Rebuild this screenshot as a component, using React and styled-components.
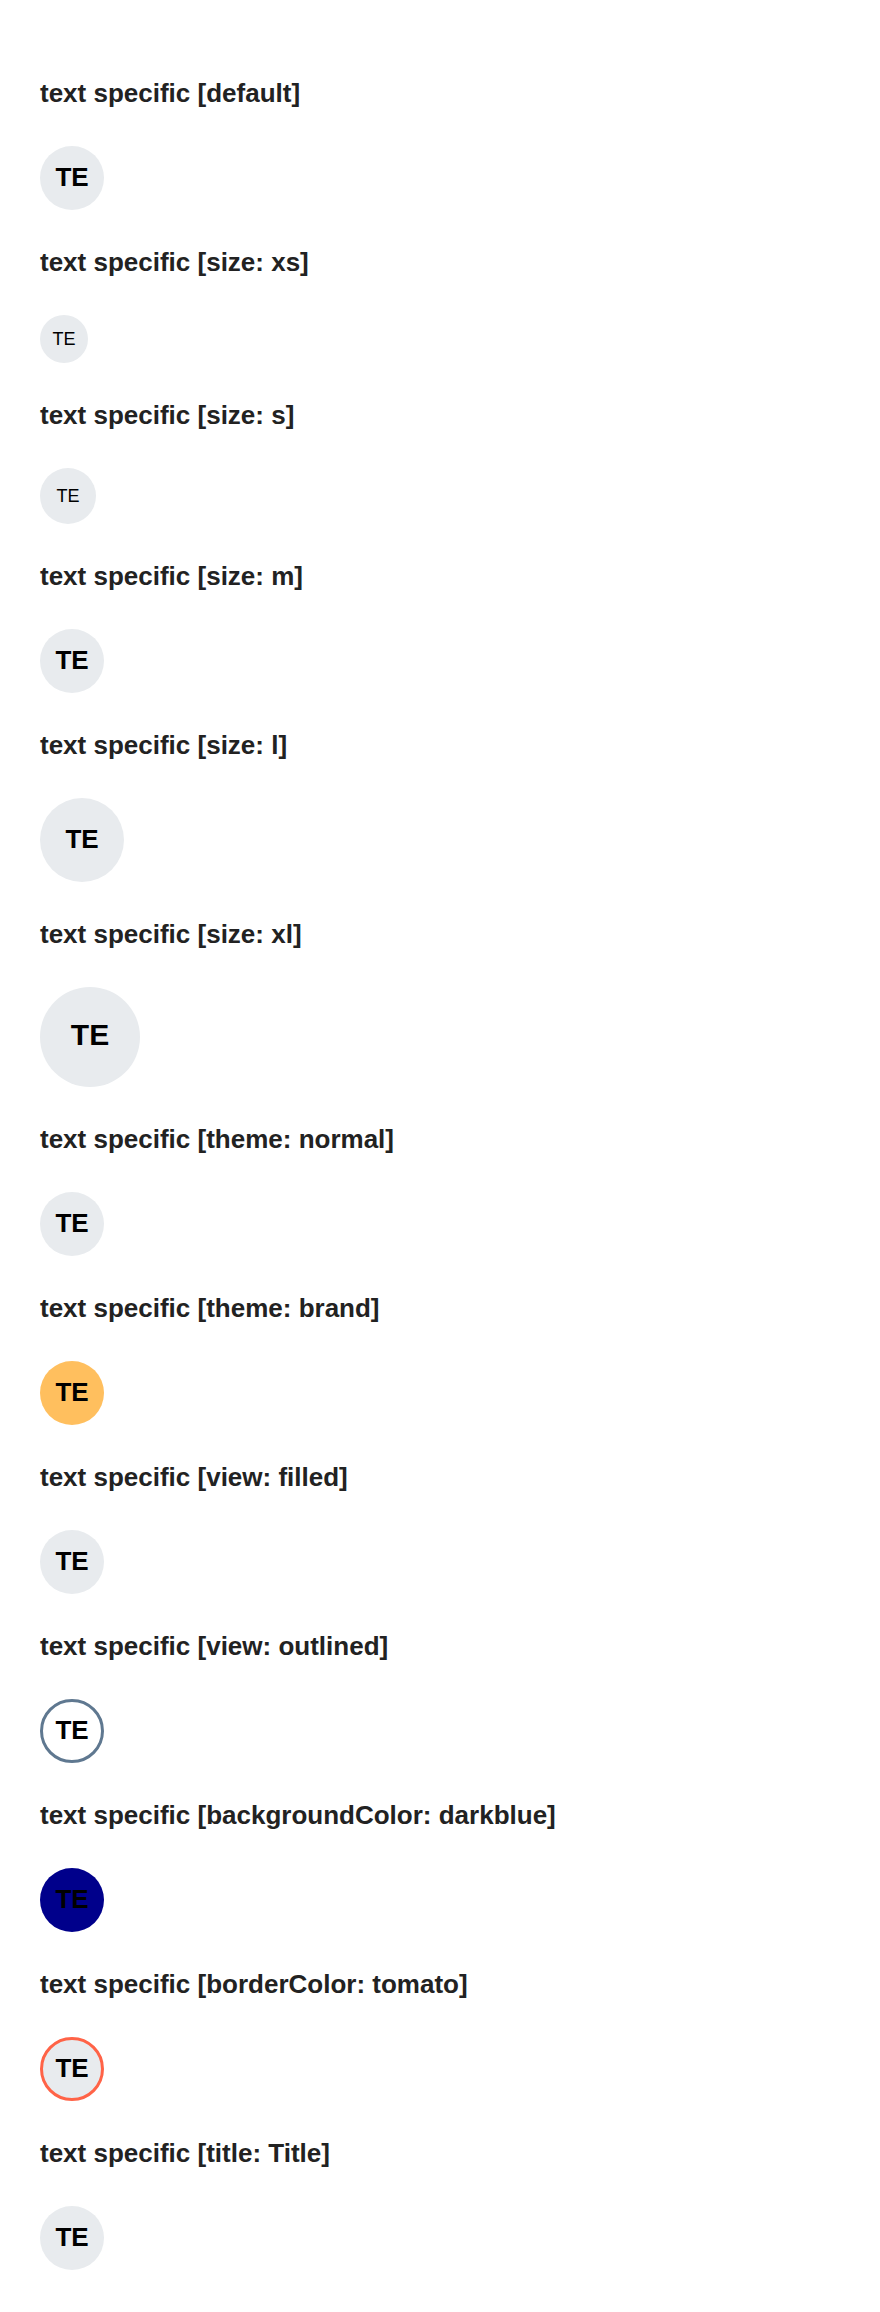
import React from "react";
import styled, { createGlobalStyle, css } from "styled-components";

const GlobalStyle = createGlobalStyle`
  html, body {
    margin: 0;
    padding: 0;
    background: #ffffff;
  }
  body {
    font-family: "Liberation Sans", Arial, sans-serif;
  }
`;

const Page = styled.main`
  display: flex;
  flex-direction: column;
  padding: 78px 40px 40px;
`;

const Section = styled.section`
  display: flex;
  flex-direction: column;
  align-items: flex-start;
`;

const Heading = styled.h3`
  margin: 0 0 38px;
  font-family: "Liberation Sans", Arial, sans-serif;
  font-size: 26px;
  font-weight: 700;
  line-height: 30px;
  color: #222222;
`;

const AvatarRow = styled.div`
  display: flex;
  margin-bottom: 37px;
`;

const SIZES = {
  xs: { box: 48, font: 18, weight: 400, lift: 0 },
  s: { box: 56, font: 18, weight: 400, lift: 0 },
  m: { box: 64, font: 26, weight: 700, lift: 1 },
  l: { box: 84, font: 26, weight: 700, lift: 1 },
  xl: { box: 100, font: 30, weight: 700, lift: 4 },
};

const THEMES = {
  normal: "#e8ebee",
  brand: "#ffbf5e",
};

const Avatar = styled.div`
  box-sizing: border-box;
  display: flex;
  align-items: center;
  justify-content: center;
  flex: none;
  border-radius: 50%;
  width: ${(p) => SIZES[p.$size].box}px;
  height: ${(p) => SIZES[p.$size].box}px;
  padding-bottom: ${(p) => SIZES[p.$size].lift}px;
  font-family: "Liberation Sans", Arial, sans-serif;
  font-size: ${(p) => SIZES[p.$size].font}px;
  font-weight: ${(p) => SIZES[p.$size].weight};
  color: #000000;
  background: ${(p) => p.$bg || THEMES[p.$theme]};
  ${(p) =>
    p.$view === "outlined" &&
    css`
      background: #ffffff;
      border: 3px solid #5f7890;
    `}
  ${(p) =>
    p.$borderColor &&
    css`
      border: 3px solid ${p.$borderColor};
    `}
`;

const items = [
  { label: "default" },
  { label: "size: xs", size: "xs" },
  { label: "size: s", size: "s" },
  { label: "size: m", size: "m" },
  { label: "size: l", size: "l" },
  { label: "size: xl", size: "xl" },
  { label: "theme: normal", theme: "normal" },
  { label: "theme: brand", theme: "brand" },
  { label: "view: filled", view: "filled" },
  { label: "view: outlined", view: "outlined" },
  { label: "backgroundColor: darkblue", bg: "darkblue" },
  { label: "borderColor: tomato", borderColor: "tomato" },
  { label: "title: Title", title: "Title" },
];

export default function App() {
  return (
    <>
      <GlobalStyle />
      <Page>
        {items.map((it) => (
          <Section key={it.label}>
            <Heading>{`text specific [${it.label}]`}</Heading>
            <AvatarRow>
              <Avatar
                $size={it.size || "m"}
                $theme={it.theme || "normal"}
                $view={it.view || "filled"}
                $bg={it.bg}
                $borderColor={it.borderColor}
                title={it.title}
              >
                TE
              </Avatar>
            </AvatarRow>
          </Section>
        ))}
      </Page>
    </>
  );
}
